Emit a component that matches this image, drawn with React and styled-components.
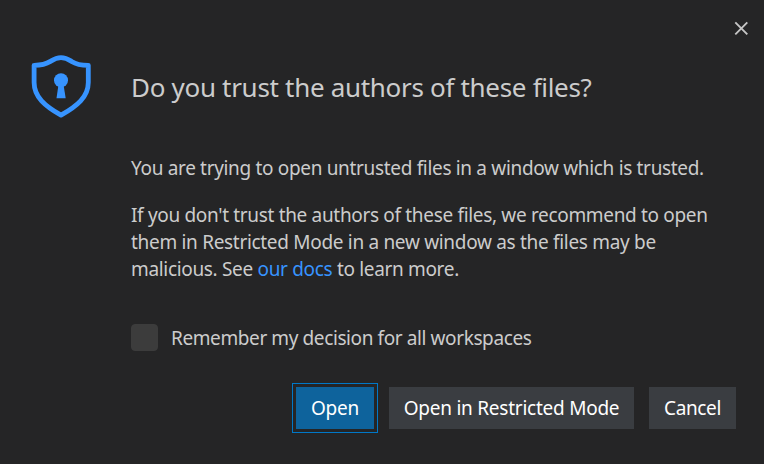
import React from 'react';
import styled, { createGlobalStyle } from 'styled-components';

const GlobalStyle = createGlobalStyle`
  * { box-sizing: border-box; }
  body { margin: 0; background: #252526; }
`;

const Dialog = styled.div`
  display: flex;
  flex-direction: column;
  width: 764px;
  height: 464px;
  overflow: hidden;
  background: #252526;
  color: #cccccc;
  font-family: "Noto Sans", "Open Sans", sans-serif;
  font-size: 19px;
  line-height: 27px;
`;

const Toolbar = styled.div`
  display: flex;
  justify-content: flex-end;
  height: 55px;
  padding: 21px 16px 0 0;
`;

const CloseButton = styled.button`
  display: block;
  width: 14px;
  height: 14px;
  padding: 0;
  border: 0;
  background: none;
  color: #c5c5c5;
  svg { display: block; }
`;

const Header = styled.div`
  display: flex;
  height: 100px;
  padding-left: 31px;
`;

const ShieldIcon = styled.svg`
  display: block;
  flex: none;
  width: 60px;
  height: 64px;
  margin-right: 40px;
`;

const Title = styled.h1`
  margin: 14px 0 0;
  font-size: 26px;
  font-weight: 400;
  line-height: 36px;
  white-space: nowrap;
  letter-spacing: ${(p) => p.$tracking}px;
`;

const Body = styled.div`
  display: flex;
  flex-direction: column;
  gap: 20px;
  height: 169px;
  padding-left: 131px;
`;

const Paragraph = styled.p`
  margin: 0;
`;

const Line = styled.span`
  display: block;
  white-space: nowrap;
  letter-spacing: ${(p) => p.$tracking}px;
`;

const Link = styled.a`
  color: #3794ff;
  text-decoration: none;
`;

const CheckRow = styled.label`
  display: flex;
  gap: 13px;
  height: 27px;
  padding-left: 131px;
`;

const CheckLabel = styled(Line)`
  padding-top: 1px;
`;

const Checkbox = styled.span`
  flex: none;
  width: 27px;
  height: 27px;
  border: 1px solid #3c3c3c;
  border-radius: 4px;
  background: #3c3c3c;
`;

const Actions = styled.div`
  display: flex;
  justify-content: flex-end;
  gap: 15px;
  margin-top: 36px;
  padding-right: 28px;
`;

const Button = styled.button`
  display: flex;
  align-items: center;
  justify-content: center;
  width: ${(p) => p.$width}px;
  height: 42px;
  padding: 0;
  border: 0;
  background: ${(p) => (p.$primary ? '#0e639c' : '#3a3d41')};
  outline: ${(p) => (p.$primary ? '1px solid #0078c8' : 'none')};
  outline-offset: 3px;
  color: #ffffff;
  font: inherit;
  white-space: nowrap;
  letter-spacing: ${(p) => p.$tracking}px;
`;

export default function App() {
  return (
    <>
      <GlobalStyle />
      <Dialog role="dialog">
        <Toolbar>
          <CloseButton aria-label="Close">
            <svg width="14" height="14" viewBox="0 0 14 14" stroke="currentColor" strokeWidth="1.9">
              <path d="M1.3 1.3 13.3 13.3M13.3 1.3 1.3 13.3" />
            </svg>
          </CloseButton>
        </Toolbar>
        <Header>
          <ShieldIcon viewBox="0 0 60 64" fill="none">
            <path
              d="M30 2.7C25 2.7 22.4 4.5 19.4 6.4C15 9.2 9.5 10.3 3.1 10.3V27.5C3.1 42 14 51 30 60.2C46 51 57.3 42 57.3 27.5V10.3C50.5 10.3 45 9.2 40.6 6.4C37.6 4.5 35 2.7 30 2.7Z"
              stroke="#3794ff"
              strokeWidth="4.8"
              strokeLinejoin="round"
            />
            <circle cx="30" cy="25.3" r="7" fill="#3794ff" />
            <path d="M27.6 29H32.4L34.7 43.3H25.5Z" fill="#3794ff" />
          </ShieldIcon>
          <Title $tracking={-0.31}>Do you trust the authors of these files?</Title>
        </Header>
        <Body>
          <Paragraph>
            <Line $tracking={-0.33}>You are trying to open untrusted files in a window which is trusted.</Line>
          </Paragraph>
          <Paragraph>
            <Line $tracking={-0.33}>If you don't trust the authors of these files, we recommend to open</Line>
            <Line $tracking={-0.31}>them in Restricted Mode in a new window as the files may be</Line>
            <Line $tracking={-0.33}>malicious. See <Link>our docs</Link> to learn more.</Line>
          </Paragraph>
        </Body>
        <CheckRow>
          <Checkbox />
          <CheckLabel $tracking={-0.4}>Remember my decision for all workspaces</CheckLabel>
        </CheckRow>
        <Actions>
          <Button $primary $width={78} $tracking={-0.25}>Open</Button>
          <Button $width={245} $tracking={-0.24}>Open in Restricted Mode</Button>
          <Button $width={87} $tracking={-0.35}>Cancel</Button>
        </Actions>
      </Dialog>
    </>
  );
}
